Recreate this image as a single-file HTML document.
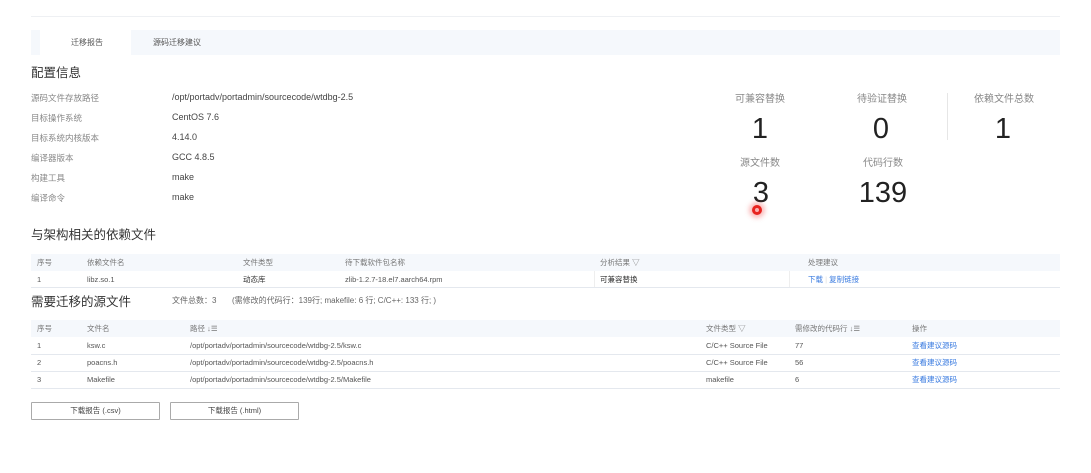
<!DOCTYPE html>
<html><head><meta charset="utf-8"><style>
*{margin:0;padding:0;box-sizing:border-box}
body{width:1091px;height:473px;background:#fff;position:relative;font-family:"Liberation Sans","Noto Sans CJK SC",sans-serif;color:#333;overflow:hidden}
.a{position:absolute;white-space:nowrap;line-height:1.2}
.lb{font-size:8.5px;color:#888}
.v{font-size:9px;color:#444}
.t{font-size:12.5px;color:#333}
.sl{font-size:10px;color:#888;transform:translateX(-50%)}
.sn{font-size:29px;color:#222;transform:translateX(-50%)}
.th{font-size:7.5px;color:#777}
.td{font-size:7.5px;color:#555}
.lk{font-size:7.5px;color:#3a7be0}
.bar{position:absolute;left:31px;width:1029px;background:#f5f8fc}
.ln{position:absolute;left:31px;width:1029px;height:1px;background:#e4e8ee}
.btn{position:absolute;top:402px;height:18px;width:129px;border:1px solid #aaa;border-radius:1px;font-size:7.5px;color:#444;text-align:center;line-height:16px}
</style></head><body>
<div class="a" style="left:31px;top:16px;width:1029px;height:1px;background:#eef0f3"></div>
<div class="bar" style="top:30px;height:25px"></div>
<div class="a" style="left:40px;top:30px;width:91px;height:25px;background:#fff"></div>
<div class="a th" style="left:71px;top:38px;color:#555;font-size:8px">迁移报告</div>
<div class="a th" style="left:153px;top:38px;color:#555;font-size:8px">源码迁移建议</div>
<div class="a t" style="left:31px;top:66px">配置信息</div>
<div class="a lb" style="left:31px;top:93px">源码文件存放路径</div><div class="a v" style="left:172px;top:92px">/opt/portadv/portadmin/sourcecode/wtdbg-2.5</div>
<div class="a lb" style="left:31px;top:113px">目标操作系统</div><div class="a v" style="left:172px;top:112px">CentOS 7.6</div>
<div class="a lb" style="left:31px;top:133px">目标系统内核版本</div><div class="a v" style="left:172px;top:132px">4.14.0</div>
<div class="a lb" style="left:31px;top:153px">编译器版本</div><div class="a v" style="left:172px;top:152px">GCC 4.8.5</div>
<div class="a lb" style="left:31px;top:173px">构建工具</div><div class="a v" style="left:172px;top:172px">make</div>
<div class="a lb" style="left:31px;top:193px">编译命令</div><div class="a v" style="left:172px;top:192px">make</div>

<div class="a sl" style="left:760px;top:94px">可兼容替换</div>
<div class="a sl" style="left:882px;top:94px">待验证替换</div>
<div class="a sl" style="left:1004px;top:94px">依赖文件总数</div>
<div class="a sn" style="left:760px;top:112px">1</div>
<div class="a sn" style="left:881px;top:112px">0</div>
<div class="a sn" style="left:1003px;top:112px">1</div>
<div class="a" style="left:947px;top:93px;width:1px;height:47px;background:#e6e6e6"></div>
<div class="a sl" style="left:760px;top:158px">源文件数</div>
<div class="a sl" style="left:883px;top:158px">代码行数</div>
<div class="a sn" style="left:761px;top:176px">3</div>
<div class="a sn" style="left:883px;top:176px">139</div>
<div class="a" style="left:752px;top:205px;width:10px;height:10px;border-radius:50%;background:#e8231f;box-shadow:0 0 5px 3px rgba(240,60,60,.35)"></div>
<div class="a" style="left:755px;top:208px;width:4px;height:4px;border-radius:50%;background:#f9b0b0"></div>

<div class="a t" style="left:31px;top:228px">与架构相关的依赖文件</div>
<div class="bar" style="top:254px;height:17px"></div>
<div class="ln" style="top:287px"></div>
<div class="a th" style="left:37px;top:258px">序号</div>
<div class="a th" style="left:87px;top:258px">依赖文件名</div>
<div class="a th" style="left:243px;top:258px">文件类型</div>
<div class="a th" style="left:345px;top:258px">待下载软件包名称</div>
<div class="a th" style="left:600px;top:258px">分析结果 ▽</div>
<div class="a th" style="left:808px;top:258px">处理建议</div>
<div class="a td" style="left:37px;top:275px">1</div>
<div class="a td" style="left:87px;top:275px">libz.so.1</div>
<div class="a td" style="left:243px;top:275px;color:#333">动态库</div>
<div class="a td" style="left:345px;top:275px">zlib-1.2.7-18.el7.aarch64.rpm</div>
<div class="a" style="left:594px;top:271px;width:1px;height:16px;background:#eee"></div>
<div class="a" style="left:789px;top:271px;width:1px;height:16px;background:#eee"></div>
<div class="a td" style="left:600px;top:275px;color:#333">可兼容替换</div>
<div class="a lk" style="left:808px;top:275px">下载 <span style="color:#ddd">|</span> 复制链接</div>

<div class="a t" style="left:31px;top:295px">需要迁移的源文件</div>
<div class="a v" style="left:172px;top:296px;font-size:8px;color:#666">文件总数：3</div>
<div class="a v" style="left:232px;top:296px;font-size:8px;color:#666">(需修改的代码行：139行; makefile: 6 行; C/C++: 133 行; )</div>
<div class="bar" style="top:320px;height:17px"></div>
<div class="ln" style="top:354px"></div><div class="ln" style="top:371px"></div><div class="ln" style="top:388px"></div>
<div class="a th" style="left:37px;top:324px">序号</div>
<div class="a th" style="left:87px;top:324px">文件名</div>
<div class="a th" style="left:190px;top:324px">路径 ↓☰</div>
<div class="a th" style="left:706px;top:324px">文件类型 ▽</div>
<div class="a th" style="left:795px;top:324px">需修改的代码行 ↓☰</div>
<div class="a th" style="left:912px;top:324px">操作</div>
<div class="a td" style="left:37px;top:341px">1</div><div class="a td" style="left:87px;top:341px">ksw.c</div><div class="a td" style="left:190px;top:341px">/opt/portadv/portadmin/sourcecode/wtdbg-2.5/ksw.c</div><div class="a td" style="left:706px;top:341px">C/C++ Source File</div><div class="a td" style="left:795px;top:341px">77</div><div class="a lk" style="left:912px;top:341px">查看建议源码</div>
<div class="a td" style="left:37px;top:358px">2</div><div class="a td" style="left:87px;top:358px">poacns.h</div><div class="a td" style="left:190px;top:358px">/opt/portadv/portadmin/sourcecode/wtdbg-2.5/poacns.h</div><div class="a td" style="left:706px;top:358px">C/C++ Source File</div><div class="a td" style="left:795px;top:358px">56</div><div class="a lk" style="left:912px;top:358px">查看建议源码</div>
<div class="a td" style="left:37px;top:375px">3</div><div class="a td" style="left:87px;top:375px">Makefile</div><div class="a td" style="left:190px;top:375px">/opt/portadv/portadmin/sourcecode/wtdbg-2.5/Makefile</div><div class="a td" style="left:706px;top:375px">makefile</div><div class="a td" style="left:795px;top:375px">6</div><div class="a lk" style="left:912px;top:375px">查看建议源码</div>

<div class="btn" style="left:31px">下载报告 (.csv)</div>
<div class="btn" style="left:170px">下载报告 (.html)</div>
</body></html>
